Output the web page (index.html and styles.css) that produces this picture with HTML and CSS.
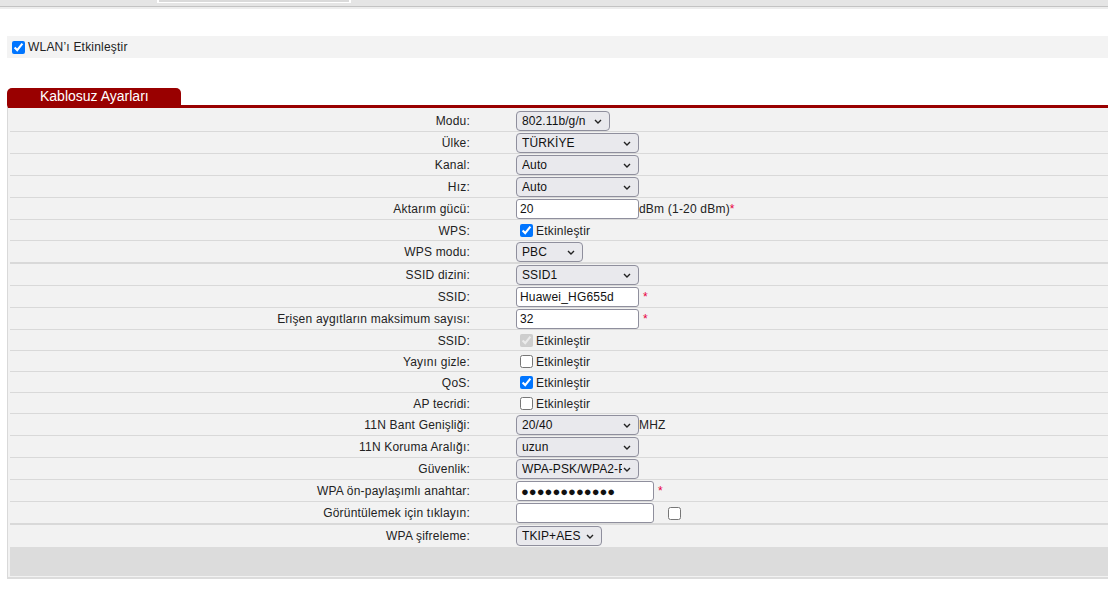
FILE: index.html
```html
<!DOCTYPE html>
<html lang="tr">
<head>
<meta charset="utf-8">
<title>Kablosuz Ayarları</title>
<link rel="stylesheet" href="styles.css">
</head>
<body>
<div class="page">
  <div class="topbar"><div class="topbar-tab"></div></div>
  <div class="topline"></div>
  <div class="content">
    <label class="wlan"><input type="checkbox" checked>WLAN’ı Etkinleştir</label>

    <div class="tab">Kablosuz Ayarları</div>
    <div class="panel">
      <div class="row"><div class="lbl">Modu:</div><div class="ctl"><span class="sel w94"><select><option>802.11b/g/n</option></select><svg viewBox="0 0 8 5"><path d="M1 1 L4 4 L7 1"/></svg></span></div></div>
      <div class="row"><div class="lbl">Ülke:</div><div class="ctl"><span class="sel w123"><select><option>TÜRKİYE</option></select><svg viewBox="0 0 8 5"><path d="M1 1 L4 4 L7 1"/></svg></span></div></div>
      <div class="row"><div class="lbl">Kanal:</div><div class="ctl"><span class="sel w123"><select><option>Auto</option></select><svg viewBox="0 0 8 5"><path d="M1 1 L4 4 L7 1"/></svg></span></div></div>
      <div class="row"><div class="lbl">Hız:</div><div class="ctl"><span class="sel w123"><select><option>Auto</option></select><svg viewBox="0 0 8 5"><path d="M1 1 L4 4 L7 1"/></svg></span></div></div>
      <div class="row"><div class="lbl">Aktarım gücü:</div><div class="ctl"><input class="txt" type="text" value="20"><span class="after">dBm (1-20 dBm)</span><span class="req">*</span></div></div>
      <div class="row cb"><div class="lbl">WPS:</div><div class="ctl"><label class="chk"><input type="checkbox" checked>Etkinleştir</label></div></div>
      <div class="row thick"><div class="lbl">WPS modu:</div><div class="ctl"><span class="sel w67"><select><option>PBC</option></select><svg viewBox="0 0 8 5"><path d="M1 1 L4 4 L7 1"/></svg></span></div></div>
      <div class="row"><div class="lbl">SSID dizini:</div><div class="ctl"><span class="sel w123"><select><option>SSID1</option></select><svg viewBox="0 0 8 5"><path d="M1 1 L4 4 L7 1"/></svg></span></div></div>
      <div class="row"><div class="lbl">SSID:</div><div class="ctl"><input class="txt" type="text" value="Huawei_HG655d"><span class="req gap">*</span></div></div>
      <div class="row"><div class="lbl">Erişen aygıtların maksimum sayısı:</div><div class="ctl"><input class="txt" type="text" value="32"><span class="req gap">*</span></div></div>
      <div class="row cb"><div class="lbl">SSID:</div><div class="ctl"><label class="chk"><input type="checkbox" checked disabled>Etkinleştir</label></div></div>
      <div class="row cb"><div class="lbl">Yayını gizle:</div><div class="ctl"><label class="chk"><input type="checkbox">Etkinleştir</label></div></div>
      <div class="row cb"><div class="lbl">QoS:</div><div class="ctl"><label class="chk"><input type="checkbox" checked>Etkinleştir</label></div></div>
      <div class="row cb"><div class="lbl">AP tecridi:</div><div class="ctl"><label class="chk"><input type="checkbox">Etkinleştir</label></div></div>
      <div class="row"><div class="lbl">11N Bant Genişliği:</div><div class="ctl"><span class="sel w123"><select><option>20/40</option></select><svg viewBox="0 0 8 5"><path d="M1 1 L4 4 L7 1"/></svg></span><span class="after">MHZ</span></div></div>
      <div class="row"><div class="lbl">11N Koruma Aralığı:</div><div class="ctl"><span class="sel w123"><select><option>uzun</option></select><svg viewBox="0 0 8 5"><path d="M1 1 L4 4 L7 1"/></svg></span></div></div>
      <div class="row"><div class="lbl">Güvenlik:</div><div class="ctl"><span class="sel w123"><select><option>WPA-PSK/WPA2-PSK</option></select><svg viewBox="0 0 8 5"><path d="M1 1 L4 4 L7 1"/></svg></span></div></div>
      <div class="row"><div class="lbl">WPA ön-paylaşımlı anahtar:</div><div class="ctl"><input class="txt w138 pw" type="text" value="●●●●●●●●●●●●"><span class="req gap">*</span></div></div>
      <div class="row thick"><div class="lbl">Görüntülemek için tıklayın:</div><div class="ctl"><input class="txt w138" type="text" value=""><input class="show" type="checkbox"></div></div>
      <div class="row last"><div class="lbl">WPA şifreleme:</div><div class="ctl"><span class="sel w86"><select><option>TKIP+AES</option></select><svg viewBox="0 0 8 5"><path d="M1 1 L4 4 L7 1"/></svg></span></div></div>
      <div class="foot"></div>
    </div>
  </div>
</div>
</body>
</html>
```

FILE: styles.css
```css
* {
  box-sizing: border-box;
}

html, body {
  margin: 0;
  padding: 0;
  background: #ffffff;
}

body {
  font-family: "Liberation Sans", Arial, sans-serif;
  font-size: 12px;
  letter-spacing: 0.2px;
  color: #222222;
}

.page {
  width: 100%;
  overflow: hidden;
}

.topbar {
  height: 7px;
  background: #e5e5e5;
  border-bottom: 1px solid #c3c3c3;
}

.topbar-tab {
  margin-left: 157px;
  width: 194px;
  height: 3px;
  background: #dadada;
  border-left: 2px solid #ffffff;
  border-right: 2px solid #ffffff;
  border-bottom: 1px solid #ffffff;
}

.topline {
  height: 2px;
  background: #ededed;
}

.content {
  padding-left: 7px;
  width: 1130px;
}

.wlan {
  display: flex;
  align-items: center;
  height: 22px;
  margin-top: 27px;
  padding-left: 1px;
  background: #f3f3f3;
  color: #222222;
  font-size: 12px;
}

input[type="checkbox"] {
  width: 13px;
  height: 13px;
  margin: 3px 3px 3px 4px;
  flex: none;
}

.tab {
  margin-top: 30px;
  width: 174px;
  height: 17px;
  padding-left: 33px;
  background: #990000;
  border-radius: 5px 5px 0 0;
  color: #ffffff;
  font-size: 14px;
  letter-spacing: 0;
  line-height: 17px;
  white-space: nowrap;
}

.panel {
  background: #f2f2f2;
  border-top: 3px solid #990000;
  border-left: 1px solid #d9d9d9;
  border-right: 1px solid #d9d9d9;
  border-bottom: 2px solid #dcdcdc;
  padding: 2px 2px 1px 2px;
}

.row {
  display: grid;
  grid-template-columns: 460px 1fr;
  column-gap: 46px;
  align-items: center;
  height: 22px;
  padding-top: 1px;
  border-bottom: 1px solid #d9d9d9;
}

.row.cb {
  height: 21px;
}

.row.thick {
  height: 23px;
  border-bottom-width: 2px;
}

.row.last {
  border-bottom-color: transparent;
}

.lbl {
  text-align: right;
  white-space: nowrap;
  line-height: 14px;
  color: #222222;
}

.ctl {
  display: flex;
  align-items: center;
  white-space: nowrap;
  line-height: 14px;
}

.sel {
  position: relative;
  display: block;
  height: 20px;
  flex: none;
}

.w94 { width: 94px; }
.w123 { width: 123px; }
.w67 { width: 67px; }
.w86 { width: 86px; }

.sel select {
  appearance: none;
  -webkit-appearance: none;
  display: block;
  width: 100%;
  height: 20px;
  margin: 0;
  padding: 0 16px 0 5px;
  border: 1px solid #8f8f9d;
  border-radius: 4px;
  background: #e9e9ed;
  font-family: "Liberation Sans", Arial, sans-serif;
  font-size: 12px;
  letter-spacing: 0.1px;
  color: #111111;
}

.sel svg {
  position: absolute;
  right: 8px;
  top: 8px;
  width: 8px;
  height: 5px;
  fill: none;
  stroke: #222222;
  stroke-width: 1.4;
  pointer-events: none;
}

.txt {
  display: block;
  width: 123px;
  height: 20px;
  margin: 0;
  padding: 0 3px;
  border: 1px solid #8f8f9d;
  border-radius: 3px;
  background: #ffffff;
  font-family: "Liberation Sans", Arial, sans-serif;
  font-size: 12px;
  letter-spacing: 0.2px;
  color: #111111;
  flex: none;
}

.txt.w138 {
  width: 138px;
}

.txt.pw {
  font-family: "Liberation Sans", "DejaVu Sans", sans-serif;
  font-size: 13px;
  letter-spacing: 0;
  padding-left: 4px;
}

.after {
  color: #222222;
}

.req {
  color: #e8003d;
  font-size: 12px;
  align-self: flex-start;
  margin-top: 3px;
}

.req.gap {
  margin-left: 4px;
}

.chk {
  display: flex;
  align-items: center;
  color: #222222;
}

.show {
  margin-left: 14px !important;
}

.foot {
  height: 29px;
  background: #dcdcdc;
}
```
